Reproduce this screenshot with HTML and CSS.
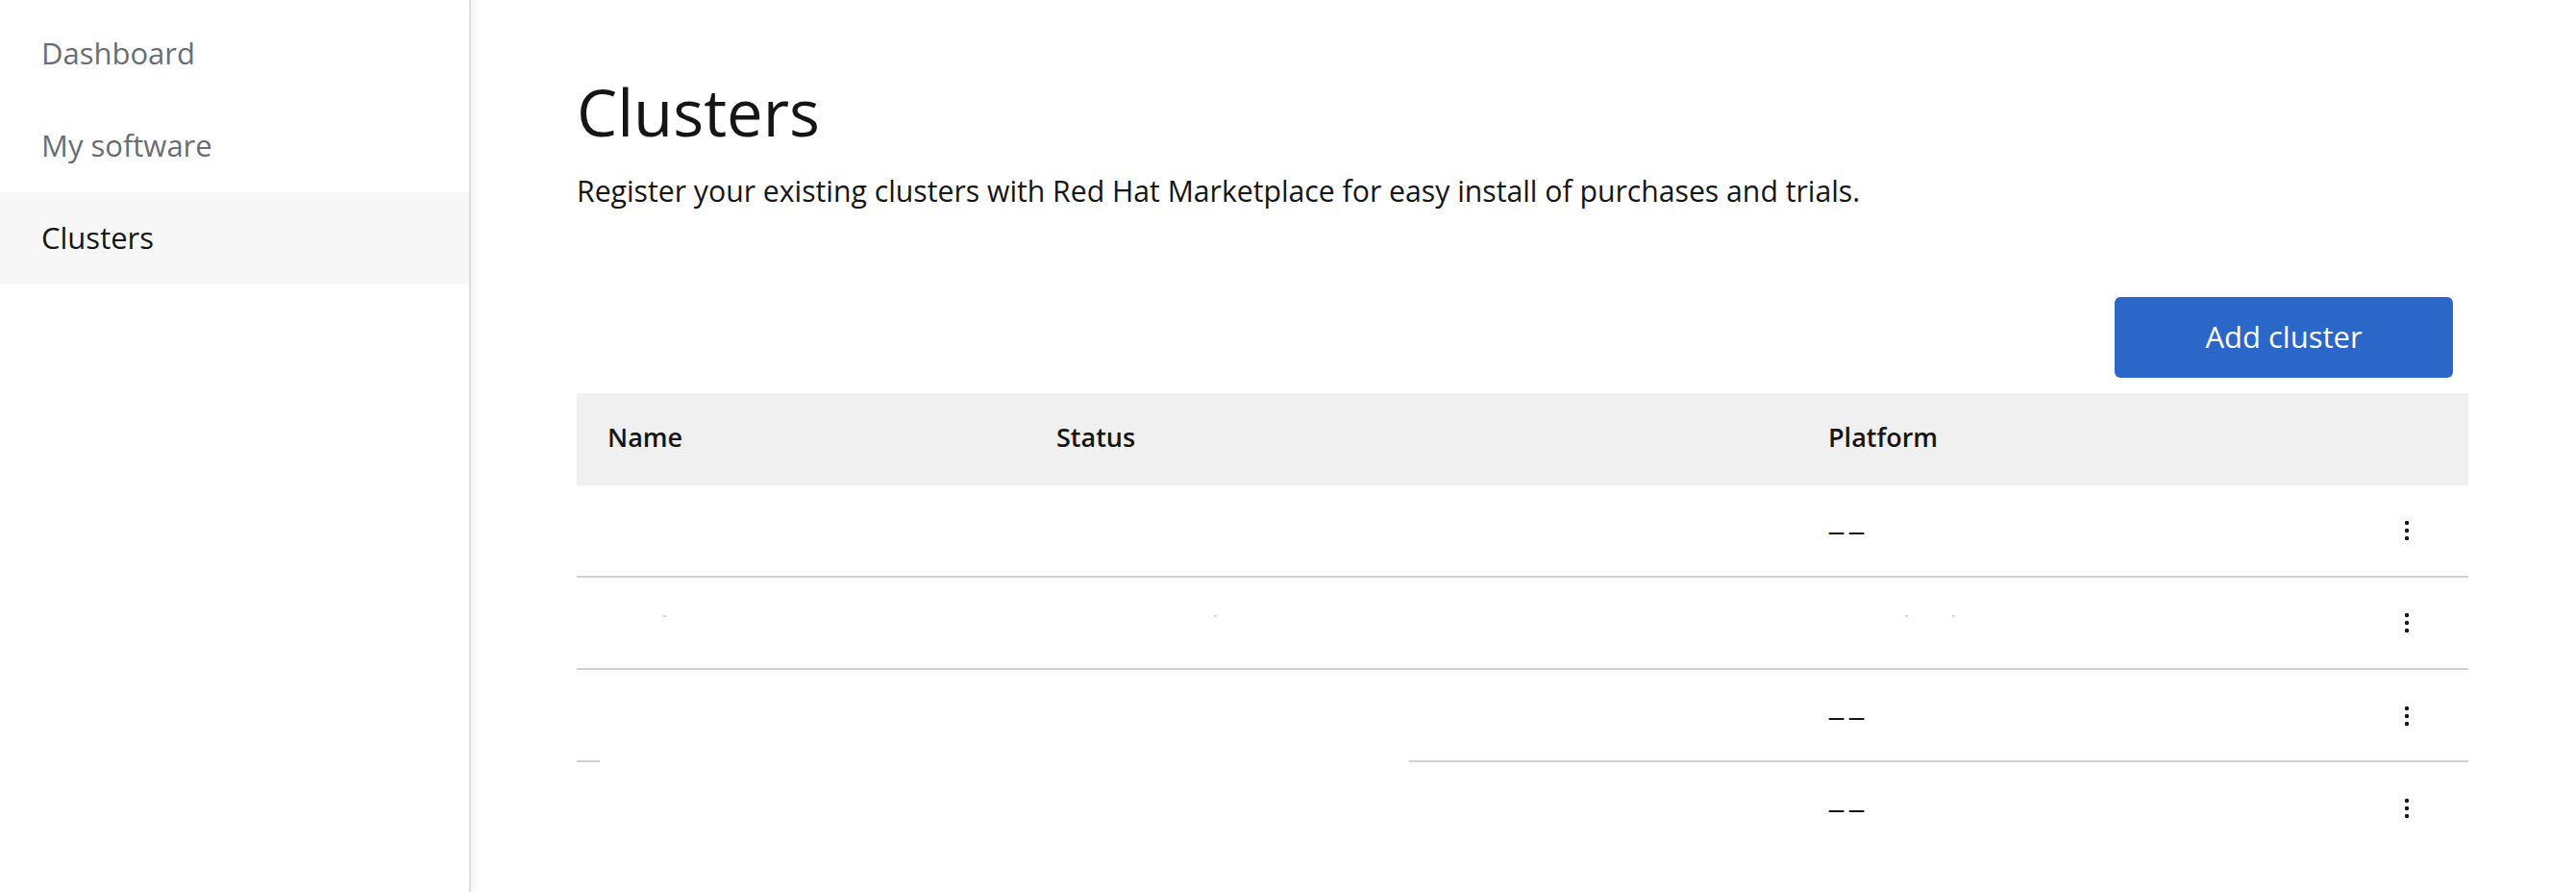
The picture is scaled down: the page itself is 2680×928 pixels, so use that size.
FILE: index.html
```html
<!DOCTYPE html>
<html lang="en">
<head>
<meta charset="utf-8">
<title>Clusters</title>
<link rel="stylesheet" href="styles.css">
</head>
<body>
<div class="app">
  <nav class="sidebar">
    <a class="nav-item">Dashboard</a>
    <a class="nav-item">My software</a>
    <a class="nav-item nav-item--current">Clusters</a>
  </nav>
  <main class="main">
    <h1 class="title">Clusters</h1>
    <p class="lead">Register your existing clusters with Red Hat Marketplace for easy install of purchases and trials.</p>
    <div class="toolbar">
      <button class="btn-primary" type="button">Add cluster</button>
    </div>
    <div class="table">
      <div class="row row--head">
        <div class="cell">Name</div>
        <div class="cell">Status</div>
        <div class="cell">Platform</div>
        <div class="cell"></div>
      </div>
      <div class="row">
        <div class="cell"></div>
        <div class="cell"></div>
        <div class="cell"><span class="empty">——</span></div>
        <div class="cell cell--action"><svg class="kebab" width="8" height="24" viewBox="0 0 8 24"><circle cx="4" cy="4" r="2.2"/><circle cx="4" cy="12" r="2.2"/><circle cx="4" cy="20" r="2.2"/></svg></div>
      </div>
      <div class="row">
        <div class="cell"><span class="speck speck--a"></span></div>
        <div class="cell"><span class="speck speck--b"></span></div>
        <div class="cell"><span class="speck speck--c"></span><span class="speck speck--d"></span></div>
        <div class="cell cell--action"><svg class="kebab" width="8" height="24" viewBox="0 0 8 24"><circle cx="4" cy="4" r="2.2"/><circle cx="4" cy="12" r="2.2"/><circle cx="4" cy="20" r="2.2"/></svg></div>
      </div>
      <div class="row row--split">
        <div class="cell"></div>
        <div class="cell"></div>
        <div class="cell"><span class="empty">——</span></div>
        <div class="cell cell--action"><svg class="kebab" width="8" height="24" viewBox="0 0 8 24"><circle cx="4" cy="4" r="2.2"/><circle cx="4" cy="12" r="2.2"/><circle cx="4" cy="20" r="2.2"/></svg></div>
      </div>
      <div class="row row--last">
        <div class="cell"></div>
        <div class="cell"></div>
        <div class="cell"><span class="empty">——</span></div>
        <div class="cell cell--action"><svg class="kebab" width="8" height="24" viewBox="0 0 8 24"><circle cx="4" cy="4" r="2.2"/><circle cx="4" cy="12" r="2.2"/><circle cx="4" cy="20" r="2.2"/></svg></div>
      </div>
    </div>
  </main>
</div>
</body>
</html>
```
FILE: styles.css
```css
html, body {
  margin: 0;
  padding: 0;
  background: #ffffff;
}
body {
  font-family: "Open Sans", "Liberation Sans", sans-serif;
  color: #151515;
  overflow: hidden;
}
.app {
  display: flex;
  min-height: 928px;
}
.sidebar {
  width: 488px;
  flex: 0 0 488px;
  display: flex;
  flex-direction: column;
  padding-top: 8px;
  border-right: 2px solid #dedede;
  box-shadow: 4px 0 8px rgba(0, 0, 0, 0.06);
  box-sizing: content-box;
  min-height: 920px;
}
.nav-item {
  height: 96px;
  display: flex;
  align-items: center;
  padding-left: 43px;
  padding-bottom: 3px;
  box-sizing: border-box;
  font-size: 31px;
  color: #6a6e73;
}
.nav-item--current {
  background: #f7f7f7;
  color: #151515;
}
.main {
  flex: 1;
  padding: 76px 112px 0 110px;
  min-width: 0;
}
.title {
  margin: 0;
  font-size: 67px;
  line-height: 1.2;
  font-weight: 400;
  color: #151515;
}
.lead {
  margin: 22px 0 0;
  font-size: 30.2px;
  line-height: 42px;
  color: #151515;
}
.toolbar {
  display: flex;
  justify-content: flex-end;
  margin-top: 89px;
  padding-right: 16px;
}
.btn-primary {
  width: 352px;
  height: 84px;
  border: 0;
  border-radius: 6px;
  background: #2b67c8;
  color: #ffffff;
  font-family: "Open Sans", "Liberation Sans", sans-serif;
  font-size: 31px;
  font-weight: 400;
  padding: 0 0 3px;
}
.table {
  margin-top: 16px;
}
.row {
  display: grid;
  grid-template-columns: 467px 803px 1fr 128px;
  height: 96px;
  box-sizing: border-box;
  border-bottom: 2px solid #d2d2d2;
  font-size: 28px;
}
.row--head {
  background: #f0f0f0;
  border-bottom: 0;
  font-size: 27px;
  font-weight: 600;
  padding-bottom: 5px;
}
.row--split {
  border-bottom: 0;
  background: linear-gradient(to right, #d2d2d2 24px, transparent 24px, transparent 866px, #d2d2d2 866px) left bottom / 100% 2px no-repeat;
}
.row--last {
  border-bottom: 0;
}
.cell {
  display: flex;
  align-items: center;
  padding-left: 32px;
}
.cell--action {
  padding-left: 0;
  justify-content: center;
}
.empty {
  font-size: 17px;
  font-weight: 700;
  letter-spacing: 4px;
  margin-top: 2px;
}
.kebab {
  fill: #151515;
}
.speck {
  display: block;
  width: 3px;
  height: 2px;
  background: #d6d6d6;
  margin-top: -14px;
}
.speck--a { margin-left: 58px; }
.speck--b { margin-left: 164px; }
.speck--c { margin-left: 80px; }
.speck--d { margin-left: 46px; }
```
